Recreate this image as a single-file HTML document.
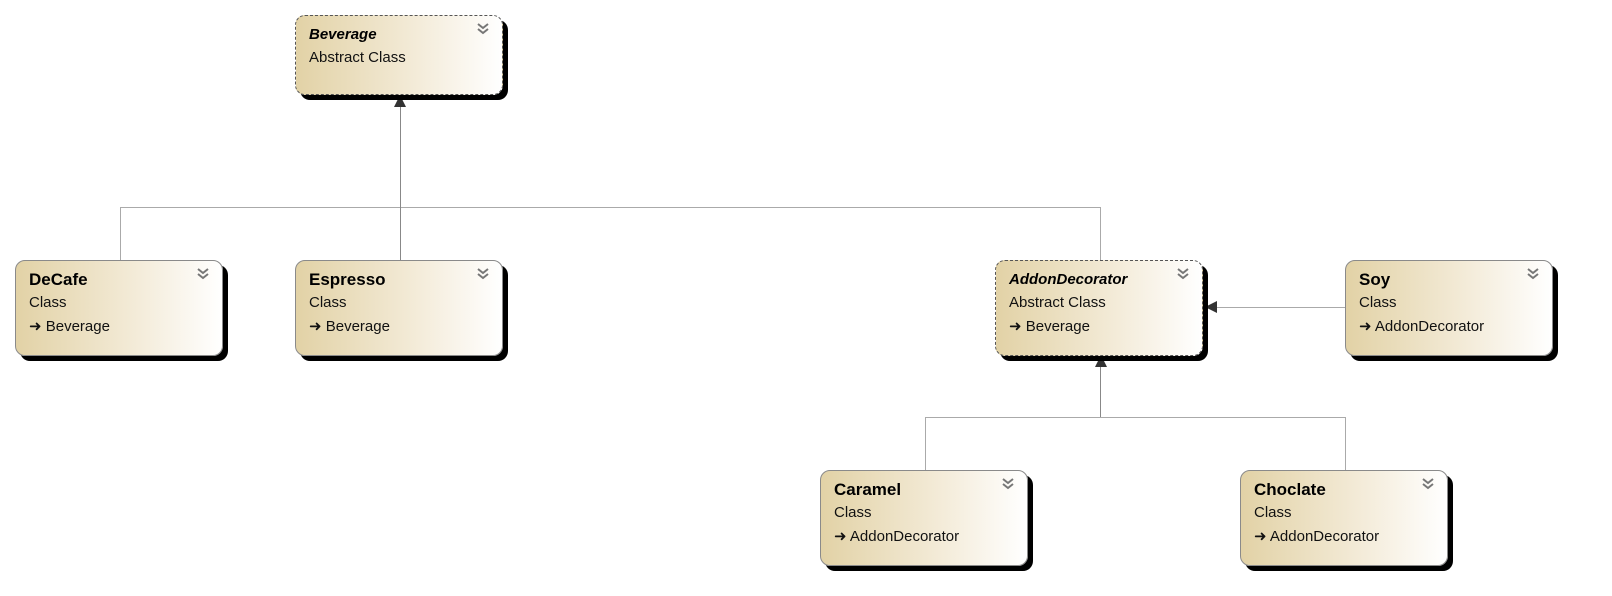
<!DOCTYPE html>
<html><head><style>
body{margin:0;width:1612px;height:596px;background:#fff;position:relative;overflow:hidden;font-family:"Liberation Sans","DejaVu Sans",sans-serif;}
.b{position:absolute;width:208px;border:1px solid #8a8a8a;border-radius:10px;background:linear-gradient(90deg,#e2d2a6,#f4ecda 60%,#fff);box-shadow:5px 5px 0 #000;box-sizing:border-box;}
.b.a{border:1px dashed #555;}
.n{position:absolute;left:13px;top:9px;font-weight:bold;font-size:17px;color:#000;}
.a .n{font-style:italic;font-size:15px;top:10px}
.t{position:absolute;left:13px;top:33px;font-size:15px;color:#111;}
.p{position:absolute;left:13px;top:56px;font-size:15px;color:#111;}
.c{position:absolute;right:12px;top:6px;}
.l{position:absolute;background:#aaa;}
</style></head><body>
<div class="l" style="left:120px;top:207px;width:981px;height:1px"></div>
<div class="l" style="left:120px;top:207px;width:1px;height:53px"></div>
<div class="l" style="left:400px;top:100px;width:1px;height:160px;background:#888"></div>
<div class="l" style="left:1100px;top:207px;width:1px;height:53px"></div>
<div class="l" style="left:1212px;top:307px;width:133px;height:1px"></div>
<div class="l" style="left:1100px;top:365px;width:1px;height:52px;background:#888"></div>
<div class="l" style="left:925px;top:417px;width:421px;height:1px"></div>
<div class="l" style="left:925px;top:417px;width:1px;height:53px"></div>
<div class="l" style="left:1345px;top:417px;width:1px;height:53px"></div>
<svg style="position:absolute;left:0;top:0" width="1612" height="596">
<polygon points="400,95 394,107 406,107" fill="#333"/>
<polygon points="1101,355 1095,367 1107,367" fill="#333"/>
<polygon points="1205,307 1217,301 1217,313" fill="#333"/>
</svg>
<div class="b a" style="left:295px;top:15px;height:80px"><div class="n">Beverage</div><div class="t" style="top:33px">Abstract Class</div><svg class="c" width="14" height="14"><path d="M2 2l5 4 5-4M2 7l5 4 5-4" stroke="#777" stroke-width="2" fill="none"/></svg></div>
<div class="b" style="left:15px;top:260px;height:96px"><div class="n">DeCafe</div><div class="t">Class</div><div class="p">➜ Beverage</div><svg class="c" width="14" height="14"><path d="M2 2l5 4 5-4M2 7l5 4 5-4" stroke="#777" stroke-width="2" fill="none"/></svg></div>
<div class="b" style="left:295px;top:260px;height:96px"><div class="n">Espresso</div><div class="t">Class</div><div class="p">➜ Beverage</div><svg class="c" width="14" height="14"><path d="M2 2l5 4 5-4M2 7l5 4 5-4" stroke="#777" stroke-width="2" fill="none"/></svg></div>
<div class="b a" style="left:995px;top:260px;height:96px"><div class="n">AddonDecorator</div><div class="t">Abstract Class</div><div class="p">➜ Beverage</div><svg class="c" width="14" height="14"><path d="M2 2l5 4 5-4M2 7l5 4 5-4" stroke="#777" stroke-width="2" fill="none"/></svg></div>
<div class="b" style="left:1345px;top:260px;height:96px"><div class="n">Soy</div><div class="t">Class</div><div class="p">➜ AddonDecorator</div><svg class="c" width="14" height="14"><path d="M2 2l5 4 5-4M2 7l5 4 5-4" stroke="#777" stroke-width="2" fill="none"/></svg></div>
<div class="b" style="left:820px;top:470px;height:96px"><div class="n">Caramel</div><div class="t">Class</div><div class="p">➜ AddonDecorator</div><svg class="c" width="14" height="14"><path d="M2 2l5 4 5-4M2 7l5 4 5-4" stroke="#777" stroke-width="2" fill="none"/></svg></div>
<div class="b" style="left:1240px;top:470px;height:96px"><div class="n">Choclate</div><div class="t">Class</div><div class="p">➜ AddonDecorator</div><svg class="c" width="14" height="14"><path d="M2 2l5 4 5-4M2 7l5 4 5-4" stroke="#777" stroke-width="2" fill="none"/></svg></div>
</body></html>
